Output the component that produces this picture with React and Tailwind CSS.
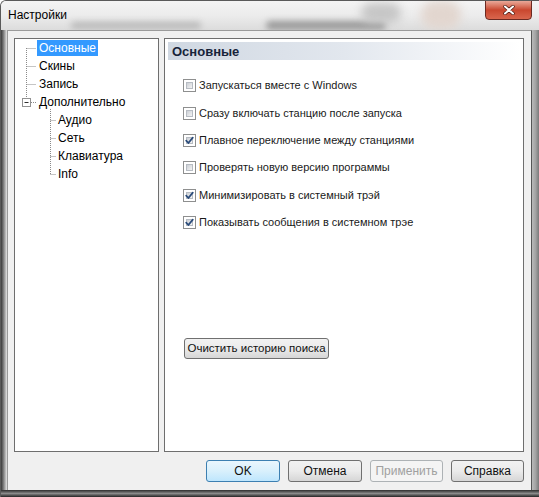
import React from "react";

const font = { fontFamily: '"Liberation Sans", Arial, sans-serif' };

function CheckBox({ checked }) {
  return (
    <span className="relative inline-block w-[13px] h-[13px] shrink-0 border border-[#8e8f8f] bg-white">
      <span className="absolute inset-[2px] bg-gradient-to-br from-[#cbcfd5] to-[#f4f4f4] border border-[#b7bcc3]" />
      {checked && (
        <svg className="absolute left-[1px] top-[1px]" width="9" height="9" viewBox="0 0 9 9">
          <path d="M1.2 4.6 L3.4 7 L7.8 1.6" fill="none" stroke="#2a4b7a" strokeWidth="1.7" strokeLinecap="round" strokeLinejoin="round" />
        </svg>
      )}
    </span>
  );
}

function Btn({ children, primary, disabled, className = "" }) {
  const border = primary
    ? "border-[#3c7fb1]"
    : disabled
    ? "border-[#adb2b5]"
    : "border-[#707070]";
  const bg = disabled
    ? "bg-[#f4f4f4]"
    : primary
    ? "bg-gradient-to-b from-[#eaf6fd] via-[#d9f0fc] to-[#bee6fd]"
    : "bg-gradient-to-b from-[#f2f2f2] via-[#ebebeb] to-[#d6d6d6]";
  return (
    <div
      className={`flex items-center justify-center whitespace-nowrap rounded-[3px] border ${border} ${bg} ${
        disabled ? "text-[#a0a0a0]" : "text-[#111]"
      } ${className}`}
      style={font}
    >
      {children}
    </div>
  );
}

const tree = [
  { label: "Основные", level: 0, selected: true },
  { label: "Скины", level: 0 },
  { label: "Запись", level: 0 },
  { label: "Дополнительно", level: 0 },
  { label: "Аудио", level: 1 },
  { label: "Сеть", level: 1 },
  { label: "Клавиатура", level: 1 },
  { label: "Info", level: 1 },
];

const options = [
  { label: "Запускаться вместе с Windows", checked: false },
  { label: "Сразу включать станцию после запуска", checked: false },
  { label: "Плавное переключение между станциями", checked: true },
  { label: "Проверять новую версию программы", checked: false },
  { label: "Минимизировать в системный трэй", checked: true },
  { label: "Показывать сообщения в системном трэе", checked: true },
];

export default function App() {
  return (
    <div className="w-[539px] h-[497px] flex flex-col overflow-hidden bg-[#d8dadc] rounded-tl-[6px] border-l border-t border-[#5a5a5a]" style={font}>
      {/* title bar */}
      <div className="relative h-[29px] shrink-0 bg-gradient-to-b from-[#f4f4f4] via-[#ececec] to-[#dcdcdc] overflow-hidden">
        <div className="absolute left-[70px] top-[21px] w-[130px] h-[7px] bg-[#b8b8b8] blur-[3px] rounded-full" />
        <div className="absolute left-[265px] top-[20px] w-[120px] h-[9px] bg-[#9a9a9a] blur-[3px] rounded-full" />
        <div className="absolute left-[360px] top-[2px] w-[40px] h-[20px] bg-[#c6c6c6] blur-[5px] rounded-full" />
        <div className="absolute left-[420px] top-[0px] w-[40px] h-[28px] bg-[#e2d6cf] blur-[5px] rounded-full" />
        <div className="absolute left-[7px] top-[6px] text-[12px] text-black leading-[16px]">Настройки</div>
        <div className="absolute left-[484px] top-[-1px] w-[47px] h-[20px] rounded-b-[4px] border border-[#6b2a22] bg-gradient-to-b from-[#e9a899] via-[#c9472f] to-[#d9664d] flex items-center justify-center">
          <svg width="12" height="10" viewBox="0 0 12 10">
            <path d="M2 1.5 L10 8.5 M10 1.5 L2 8.5" stroke="#4a1a12" strokeWidth="3.4" strokeLinecap="round" />
            <path d="M2 1.5 L10 8.5 M10 1.5 L2 8.5" stroke="#ffffff" strokeWidth="2" strokeLinecap="round" />
          </svg>
        </div>
      </div>

      <div className="flex flex-1 min-h-0">
        {/* left frame */}
        <div className="w-[6px] shrink-0 bg-gradient-to-r from-[#3a3a3a] via-[#8c8c8c] to-[#e6e6e6]" />
        {/* client */}
        <div className="flex-1 flex flex-col bg-[#f0f0f0] border-l border-t border-[#9a9a9a] border-r border-r-[#555] pt-[7px] pl-[6px] pr-[7px]">
          <div className="flex gap-[5px] h-[414px]">
            {/* tree */}
            <div className="relative w-[145px] h-full border border-[#6e6e6e] bg-white">
              <svg className="absolute left-0 top-0" width="143" height="200" viewBox="0 0 143 200">
                <g stroke="#8a8a8a" strokeWidth="1" strokeDasharray="1 1" fill="none">
                  <path d="M11.5 9 V59" />
                  <path d="M11.5 9.5 H21" />
                  <path d="M11.5 27.5 H21" />
                  <path d="M11.5 45.5 H21" />
                  <path d="M16 63.5 H21" />
                  <path d="M35.5 70 V135" />
                  <path d="M35.5 81.5 H41" />
                  <path d="M35.5 99.5 H41" />
                  <path d="M35.5 117.5 H41" />
                  <path d="M35.5 135.5 H41" />
                </g>
                <rect x="7.5" y="59.5" width="8" height="8" fill="#fff" stroke="#919191" />
                <path d="M9.5 63.5 H13.5" stroke="#303030" strokeWidth="1" />
              </svg>
              <div className="relative flex flex-col text-[12px] text-black">
                {tree.map((t) => (
                  <div key={t.label} className={`h-[18px] flex items-center ${t.level ? "pl-[41px]" : "pl-[22px]"}`}>
                    <span
                      className={`h-[16px] leading-[16px] px-[2px] ${
                        t.selected ? "bg-[#3399ff] text-white" : ""
                      }`}
                    >
                      {t.label}
                    </span>
                  </div>
                ))}
              </div>
            </div>

            {/* right panel */}
            <div className="flex-1 h-full border border-[#6e6e6e] bg-white flex flex-col p-[3px]">
              <div className="h-[18px] bg-gradient-to-r from-[#d0d8e2] via-[#e2e7ee] to-white flex items-center pl-[4px]">
                <span className="text-[13px] font-bold text-[#17243a] leading-none">Основные</span>
              </div>
              <div className="flex flex-col mt-[12px] pl-[15px]">
                {options.map((o) => (
                  <div key={o.label} className="h-[27.4px] flex items-center gap-[3px]">
                    <CheckBox checked={o.checked} />
                    <span className="text-[11px] text-[#1a1a1a] leading-none">{o.label}</span>
                  </div>
                ))}
              </div>
              <div className="mt-[102px] pl-[16px] flex">
                <Btn className="w-[145px] h-[21px] text-[11.5px]">Очистить историю поиска</Btn>
              </div>
            </div>
          </div>

          <div className="mt-[8px] flex justify-end gap-[8px]">
            <Btn primary className="w-[74px] h-[22px] text-[12px]">OK</Btn>
            <Btn className="w-[74px] h-[22px] text-[12px]">Отмена</Btn>
            <Btn disabled className="w-[73px] h-[22px] text-[12px]">Применить</Btn>
            <Btn className="w-[73px] h-[22px] text-[12px]">Справка</Btn>
          </div>
        </div>
        {/* right frame */}
        <div className="w-[7px] shrink-0 bg-gradient-to-r from-[#b9b9b9] via-[#a3a3a3] to-[#7a7a7a]" />
      </div>

      {/* bottom frame */}
      <div className="h-[7px] shrink-0 bg-gradient-to-b from-[#2e2e2e] via-[#8a8a8a] to-[#262626]" />
    </div>
  );
}
